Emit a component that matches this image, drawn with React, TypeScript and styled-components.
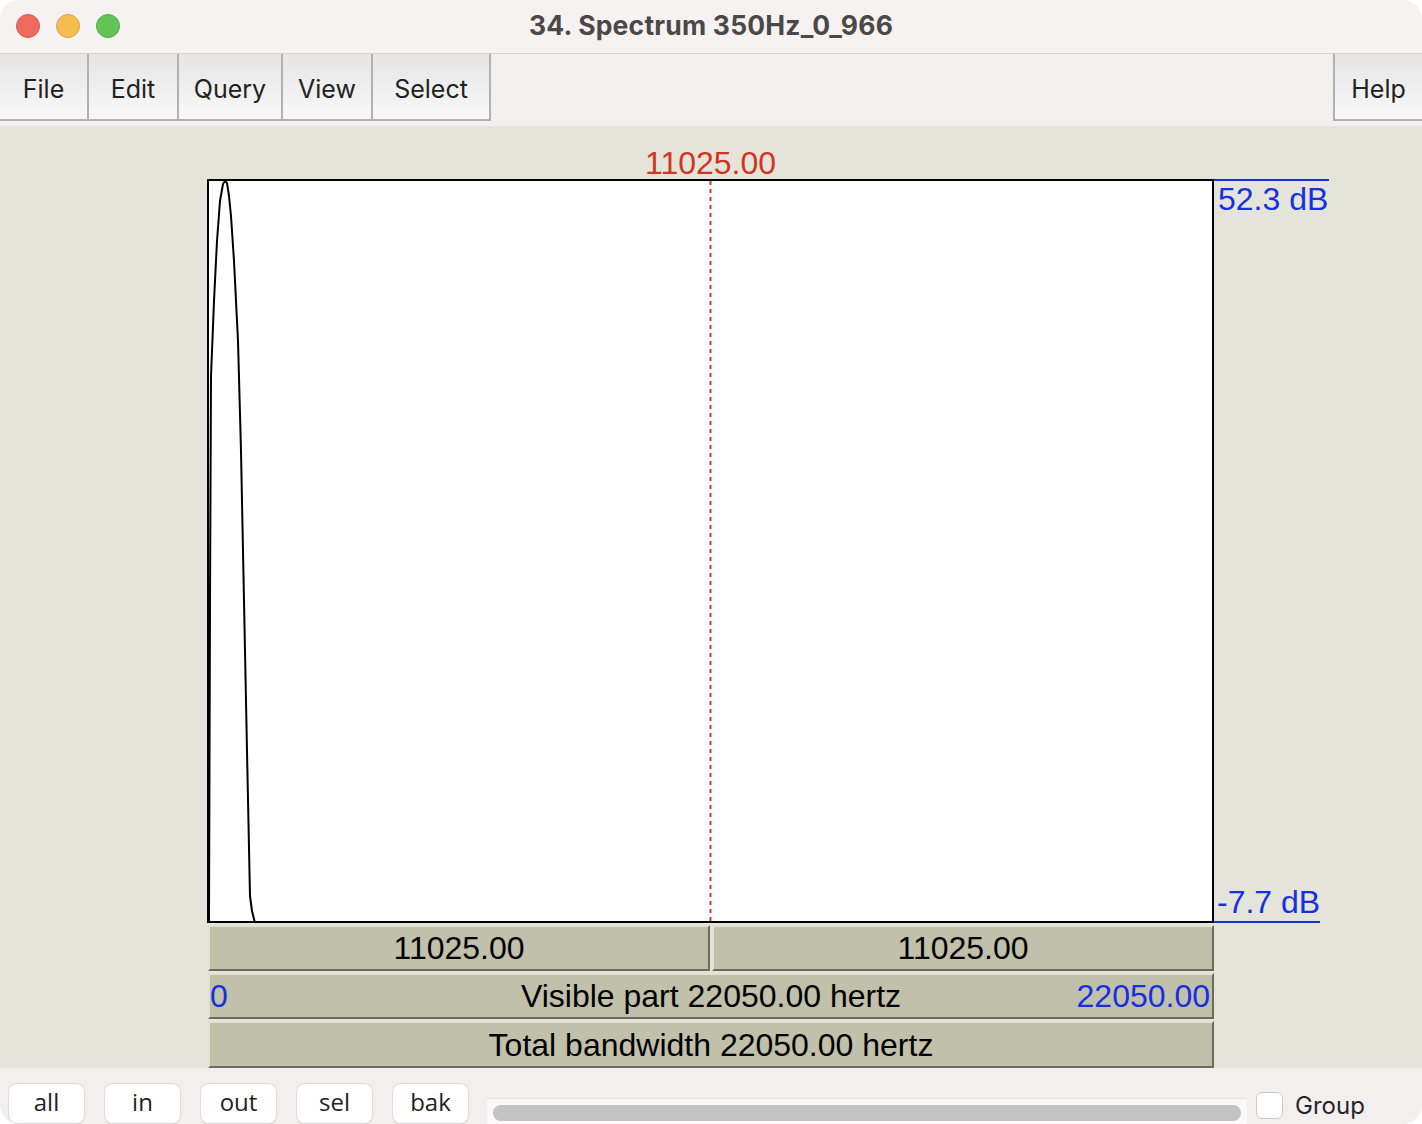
import React from "react";
import styled, { createGlobalStyle } from "styled-components";

const Global = createGlobalStyle`
  html, body { margin: 0; padding: 0; background: #ffffff; }
  body { width: 1422px; height: 1124px; overflow: hidden; }
  #root { width: 1422px; height: 1124px; }
`;

const BLUE = "#1530de";

const Window = styled.div`
  width: 1422px;
  height: 1124px;
  box-sizing: border-box;
  display: flex;
  flex-direction: column;
  border-radius: 20px;
  overflow: hidden;
  background: #f3efef;
  font-family: "Liberation Sans", Arial, sans-serif;
`;

const TitleBar = styled.div`
  height: 54px;
  flex: none;
  box-sizing: border-box;
  display: grid;
  grid-template-columns: 1fr auto 1fr;
  align-items: center;
  background: #f6f2f2;
  border-bottom: 1px solid #d6d2d2;
`;

const Lights = styled.div`
  display: flex;
  gap: 16px;
  padding-left: 16px;
  margin-top: -2px;
`;

const Light = styled.span<{ $c: string; $b: string }>`
  width: 24px;
  height: 24px;
  border-radius: 50%;
  box-sizing: border-box;
  background: ${(p) => p.$c};
  border: 1px solid ${(p) => p.$b};
`;

const Title = styled.div`
  font-family: Inter, "Liberation Sans", sans-serif;
  font-weight: 700;
  font-size: 26.5px;
  color: #4b4848;
  letter-spacing: 0.2px;
  margin-top: -3px;
`;

const MenuBar = styled.div`
  height: 72px;
  flex: none;
  display: flex;
  align-items: flex-start;
  background: #f3efef;
`;

const MenuButton = styled.div<{ $w: number; $left?: boolean }>`
  width: ${(p) => p.$w}px;
  height: 67px;
  box-sizing: border-box;
  display: flex;
  align-items: center;
  justify-content: center;
  background: linear-gradient(#e5e5e5, #f8f8f8);
  border-bottom: 2px solid #b1b1b1;
  ${(p) => (p.$left ? "border-left: 2px solid #b1b1b1;" : "border-right: 2px solid #b1b1b1;")}
  font-family: Inter, "Liberation Sans", sans-serif;
  font-size: 25px;
  color: #222;
  padding-top: 4px;
`;

const Spacer = styled.div`
  flex: 1;
`;

const Main = styled.div`
  flex: 1;
  background: #e4e4da;
  padding-left: 207px;
  display: flex;
  flex-direction: column;
`;

const ChartGrid = styled.div`
  display: grid;
  grid-template-columns: 1007px auto;
  grid-template-rows: 53px 744px auto;
`;

const CursorLabel = styled.div`
  display: flex;
  align-items: flex-end;
  justify-content: center;
  color: #d23420;
  font-size: 32px;
  line-height: 32px;
  padding-bottom: 0px;
  box-sizing: border-box;
`;

const Plot = styled.div`
  box-sizing: border-box;
  border: 2px solid #000;
  background: #fff;
  svg { display: block; }
`;

const Axis = styled.div`
  display: flex;
  flex-direction: column;
  justify-content: space-between;
  align-items: flex-start;
`;

const DbTop = styled.div`
  border-top: 2px solid ${BLUE};
  color: ${BLUE};
  font-size: 32px;
  line-height: 37px;
  padding: 0 1px 0 4px;
`;

const DbBottom = styled.div`
  border-bottom: 2px solid ${BLUE};
  color: ${BLUE};
  font-size: 32px;
  line-height: 37px;
  padding: 0 0 0 3px;
`;

const Bars = styled.div`
  grid-column: 1;
  display: flex;
  flex-direction: column;
  gap: 2px;
  margin: 2px 0 0 1px;
  width: 1006px;
`;

const BarRow = styled.div`
  display: flex;
  gap: 2px;
`;

const Cell = styled.div<{ $h: number }>`
  flex: 1;
  height: ${(p) => p.$h}px;
  box-sizing: border-box;
  background: #c0c0ab;
  border-top: 2px solid #e2e2d4;
  border-left: 2px solid #e2e2d4;
  border-bottom: 2px solid #6c6c5c;
  border-right: 2px solid #6c6c5c;
  display: flex;
  align-items: center;
  justify-content: center;
  position: relative;
  font-size: 32px;
  color: #000;
  padding-top: 1px;
`;

const EdgeNum = styled.span<{ $side: "left" | "right" }>`
  position: absolute;
  ${(p) => (p.$side === "left" ? "left: 0;" : "right: 2px;")}
  top: 50%;
  transform: translateY(-48%);
  color: ${BLUE};
`;

const BottomBar = styled.div`
  height: 56px;
  flex: none;
  display: flex;
  align-items: flex-start;
  padding: 15px 0 0 8px;
  box-sizing: border-box;
  background: #f3efef;
`;

const Buttons = styled.div`
  display: flex;
  gap: 19px;
`;

const ZoomButton = styled.div`
  width: 77px;
  height: 41px;
  box-sizing: border-box;
  border-radius: 9px;
  background: #ffffff;
  border: 1px solid #dcdcdc;
  box-shadow: 0 1px 1px rgba(0, 0, 0, 0.08);
  display: flex;
  align-items: center;
  justify-content: center;
  font-family: "Open Sans", Inter, sans-serif;
  font-size: 24px;
  color: #222;
  padding-bottom: 4px;
`;

const Scroll = styled.div`
  margin: 15px 0 0 18px;
  width: 760px;
  height: 26px;
  box-sizing: border-box;
  background: #faf8f8;
  border-top: 1px solid #e6e3e3;
  padding: 6px 6px 0 6px;
`;

const Thumb = styled.div`
  height: 16px;
  border-radius: 8px;
  background: #c3c3c3;
`;

const GroupBox = styled.label`
  display: flex;
  align-items: center;
  gap: 12px;
  margin: 8px 0 0 9px;
  font-family: Inter, "Liberation Sans", sans-serif;
  font-size: 24px;
  color: #262626;
`;

const Check = styled.span`
  width: 27px;
  height: 27px;
  box-sizing: border-box;
  border-radius: 6px;
  border: 1px solid #c9c9c9;
  background: #fff;
`;

const curve =
  "0,740 1,420 2,195 5,120 8,60 11,20 14,3 16,0 18,2 20,15 22,35 25,80 29,160 32,270 35,420 38,570 41,715 43,730 46,742";

export default function App() {
  const menus: [string, number][] = [
    ["File", 89],
    ["Edit", 90],
    ["Query", 104],
    ["View", 90],
    ["Select", 118],
  ];
  return (
    <>
      <Global />
      <Window>
        <TitleBar>
          <Lights>
            <Light $c="#ee6a5f" $b="#d65a50" />
            <Light $c="#f5bd4f" $b="#d9a23f" />
            <Light $c="#61c454" $b="#4fae44" />
          </Lights>
          <Title>34. Spectrum 350Hz_0_966</Title>
          <div />
        </TitleBar>
        <MenuBar>
          {menus.map(([m, w]) => (
            <MenuButton key={m} $w={w}>
              {m}
            </MenuButton>
          ))}
          <Spacer />
          <MenuButton $w={89} $left>
            Help
          </MenuButton>
        </MenuBar>
        <Main>
          <ChartGrid>
            <CursorLabel>11025.00</CursorLabel>
            <div />
            <Plot>
              <svg width="1003" height="740" viewBox="0 0 1003 740">
                <line
                  x1="501.5"
                  y1="0"
                  x2="501.5"
                  y2="740"
                  stroke="#d4382a"
                  strokeWidth="2"
                  strokeDasharray="4 4"
                />
                <polyline points={curve} fill="none" stroke="#000" strokeWidth="2" strokeLinejoin="round" />
              </svg>
            </Plot>
            <Axis>
              <DbTop>52.3 dB</DbTop>
              <DbBottom>-7.7 dB</DbBottom>
            </Axis>
            <Bars>
              <BarRow>
                <Cell $h={46}>11025.00</Cell>
                <Cell $h={46}>11025.00</Cell>
              </BarRow>
              <BarRow>
                <Cell $h={46}>
                  <EdgeNum $side="left">0</EdgeNum>
                  Visible part 22050.00 hertz
                  <EdgeNum $side="right">22050.00</EdgeNum>
                </Cell>
              </BarRow>
              <BarRow>
                <Cell $h={47}>Total bandwidth 22050.00 hertz</Cell>
              </BarRow>
            </Bars>
          </ChartGrid>
        </Main>
        <BottomBar>
          <Buttons>
            {["all", "in", "out", "sel", "bak"].map((b) => (
              <ZoomButton key={b}>{b}</ZoomButton>
            ))}
          </Buttons>
          <Scroll>
            <Thumb />
          </Scroll>
          <GroupBox>
            <Check />
            Group
          </GroupBox>
        </BottomBar>
      </Window>
    </>
  );
}
